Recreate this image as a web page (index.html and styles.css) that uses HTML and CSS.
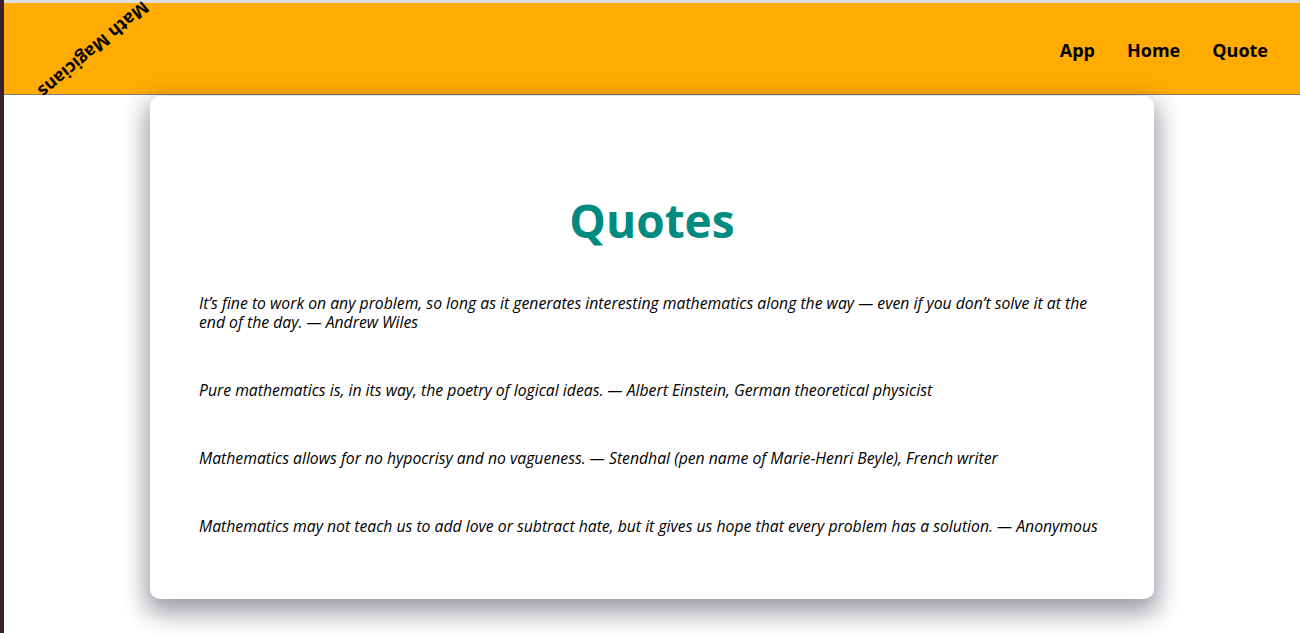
FILE: index.html
```html
<!DOCTYPE html>
<html lang="en">
<head>
<meta charset="utf-8">
<title>Math Magicians</title>
<link rel="stylesheet" href="styles.css">
</head>
<body>
<div class="screen">
  <div class="edge"></div>
  <div class="page">
    <div class="topline"></div>
    <header class="header">
      <div class="logo">Math Magicians</div>
      <nav class="nav">
        <a href="#">App</a>
        <a href="#">Home</a>
        <a href="#">Quote</a>
      </nav>
    </header>
    <main class="main">
      <section class="card">
        <h1 class="title">Quotes</h1>
        <p class="quote">It’s fine to work on any problem, so long as it generates interesting mathematics along the way — even if you don’t solve it at the end of the day. — Andrew Wiles</p>
        <p class="quote">Pure mathematics is, in its way, the poetry of logical ideas. — Albert Einstein, German theoretical physicist</p>
        <p class="quote">Mathematics allows for no hypocrisy and no vagueness. — Stendhal (pen name of Marie-Henri Beyle), French writer</p>
        <p class="quote">Mathematics may not teach us to add love or subtract hate, but it gives us hope that every problem has a solution. — Anonymous</p>
      </section>
    </main>
  </div>
</div>
</body>
</html>
```

FILE: styles.css
```css
* { box-sizing: border-box; }
html, body { margin: 0; padding: 0; }
body {
  background: #fff;
  font-family: "Open Sans", "Noto Sans", sans-serif;
  color: #000;
  overflow: hidden;
}
.screen {
  display: flex;
  min-height: 633px;
}
.edge {
  width: 4px;
  flex: none;
  background: #3b1f2f;
}
.page {
  flex: 1;
  display: flex;
  flex-direction: column;
}
.topline {
  height: 3px;
  background: #dedede;
}
.header {
  height: 92px;
  background: #ffab00;
  border-bottom: 1px solid #7d7d7d;
  display: flex;
  align-items: center;
  justify-content: space-between;
  padding: 0 32px 0 16px;
}
.logo {
  font-weight: 700;
  font-size: 17.5px;
  white-space: nowrap;
  transform: translate(5px, 3px) rotate(140deg);
  margin-top: -4px;
}
.nav {
  display: flex;
  gap: 32px;
  margin-top: 3px;
}
.nav a {
  color: #000;
  text-decoration: none;
  font-weight: 700;
  font-size: 18px;
}
.main {
  display: flex;
  justify-content: center;
  padding-top: 1px;
}
.card {
  position: relative;
  z-index: 1;
  width: 1004px;
  background: #fff;
  border-radius: 10px;
  box-shadow: 0 10px 24px 4px rgba(30, 30, 50, 0.45);
  padding: 96px 49px 63px 49px;
}
.title {
  margin: 0 0 46px;
  text-align: center;
  color: #008a80;
  font-size: 46px;
  line-height: 56px;
  font-weight: 700;
}
.quote {
  margin: 0 0 49px;
  font-style: italic;
  font-size: 15.75px;
  line-height: 19px;
}
.quote:last-child { margin-bottom: 0; }
```
